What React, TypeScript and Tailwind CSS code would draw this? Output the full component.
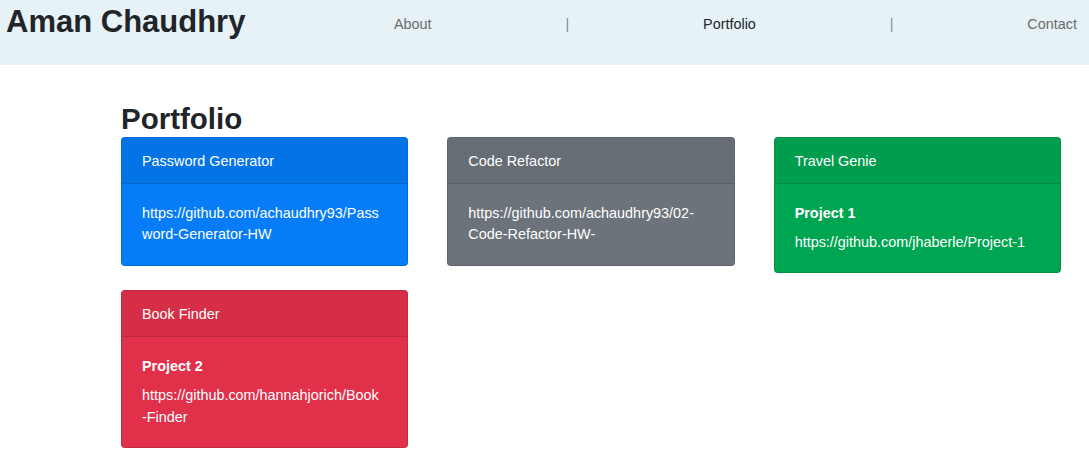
import React from 'react'

type Project = {
    title: string
    subtitle?: string
    url: string
    body: string
    head: string
}

const projects: Project[] = [
    {
        title: 'Password Generator',
        url: 'https://github.com/achaudhry93/Password-Generator-HW',
        body: 'bg-[#067cf6]',
        head: 'bg-[#0473e6]',
    },
    {
        title: 'Code Refactor',
        url: 'https://github.com/achaudhry93/02-Code-Refactor-HW-',
        body: 'bg-[#6c737a]',
        head: 'bg-[#666d74]',
    },
    {
        title: 'Travel Genie',
        subtitle: 'Project 1',
        url: 'https://github.com/jhaberle/Project-1',
        body: 'bg-[#00a552]',
        head: 'bg-[#009d4e]',
    },
    {
        title: 'Book Finder',
        subtitle: 'Project 2',
        url: 'https://github.com/hannahjorich/Book-Finder',
        body: 'bg-[#e0304a]',
        head: 'bg-[#d62e46]',
    },
]

const ProjectCard: React.FC<{ project: Project }> = ({ project }) => {
    return (
        <div
            className={`${project.body} rounded-[4px] border border-black/[0.125] text-white overflow-hidden`}
        >
            <div
                className={`${project.head} border-b border-black/[0.125] px-[20px] py-[11.5px] leading-[22px]`}
            >
                {project.title}
            </div>
            <div className="pl-[20px] pr-[26px] py-[18.8px] leading-[21.6px]">
                {project.subtitle && (
                    <p className="font-bold mb-[7.4px]">{project.subtitle}</p>
                )}
                <p className="break-words">{project.url}</p>
            </div>
        </div>
    )
}

export default function App() {
    return (
        <div className="min-h-screen bg-white font-['Liberation_Sans',Arial,sans-serif] text-[14.4px] text-[#212529]">
            <header className="flex h-[65px] items-start bg-[#e6f2f5]">
                <h1 className="w-[394px] pl-[6px] pt-[3px] text-[31px] font-bold leading-[38px]">
                    Aman Chaudhry
                </h1>
                <nav className="flex flex-1 justify-between pr-[12px] pt-[14px] leading-[21.6px]">
                    <a className="text-[#6c6c6c]">About</a>
                    <span className="text-[#8a8a8a]">|</span>
                    <a className="text-[#212529]">Portfolio</a>
                    <span className="text-[#8a8a8a]">|</span>
                    <a className="text-[#6c6c6c]">Contact</a>
                </nav>
            </header>
            <main className="pl-[121px] pt-[36px]">
                <h2 className="mb-px text-[29.5px] font-bold leading-[35px]">
                    Portfolio
                </h2>
                <div className="grid w-[940px] grid-cols-3 items-start gap-x-[39px] gap-y-[17px]">
                    {projects.map((p) => (
                        <ProjectCard key={p.title} project={p} />
                    ))}
                </div>
            </main>
        </div>
    )
}
